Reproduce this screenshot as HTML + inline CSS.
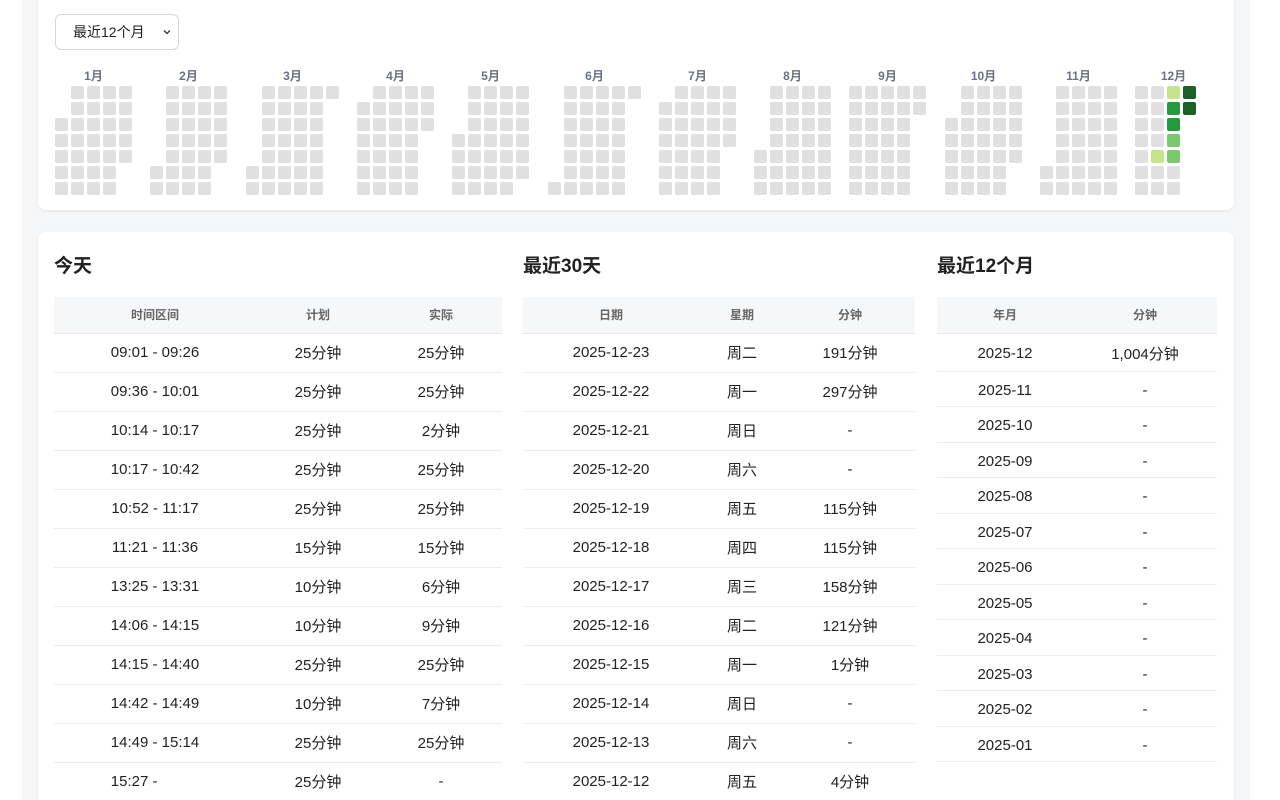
<!DOCTYPE html>
<html><head><meta charset="utf-8">
<style>
*{box-sizing:border-box;margin:0;padding:0}
html,body{width:1280px;height:800px;overflow:hidden;background:#fff;font-family:"Liberation Sans","Noto Sans CJK SC",sans-serif;color:#222}
.wrap{position:relative;width:1280px;height:800px;overflow:hidden}
.bg{position:absolute;left:22px;top:0;width:1228px;height:800px;background:#f5f6f8}
.card{position:absolute;left:38px;width:1196px;background:#fff;border-radius:8px;box-shadow:0 1px 3px rgba(0,0,0,.08)}
#c1{top:-10px;height:220px}
#c2{top:232px;height:600px}
.sel{position:absolute;left:55px;top:14px;width:124px;height:36px;border:1px solid #d4d7dc;border-radius:6px;background:#fff;font-size:14px;line-height:34px;padding-left:17px;color:#222}
.sel svg{position:absolute;right:6px;top:13px}
.ml{position:absolute;top:67px;font-size:12px;font-weight:bold;color:#6b7280;text-align:center}
.cell{position:absolute;width:13px;height:13px;border-radius:2px;background:#e0e0e0}
h2{position:absolute;top:251px;font-size:19px;font-weight:bold;color:#222}
table{position:absolute;top:297px;border-collapse:collapse;font-size:15px;table-layout:fixed}
th{height:36px;background:#f6f7f9;font-size:12px;font-weight:bold;color:#666;border-bottom:1px solid #e3e5e8;text-align:center}
td{height:39px;text-align:center;border-bottom:1px solid #ebedf0}
#t3 td{height:35.5px;padding-top:3px}
#t3 tr:nth-child(2) td{height:38px}
</style></head><body><div class="wrap">
<div class="bg"></div>
<div class="card" id="c1"></div>
<div class="sel">最近12个月<svg width="10" height="8" viewBox="0 0 10 8"><path d="M2 2.5l3 3 3-3" fill="none" stroke="#333" stroke-width="1.3"/></svg></div>
<div id="hm"></div>
<div class="card" id="c2"></div>
<h2 style="left:54px">今天</h2>
<h2 style="left:523px">最近30天</h2>
<h2 style="left:937px">最近12个月</h2>
<table style="left:54px;width:448px">
<colgroup><col style="width:202px"><col style="width:124px"><col style="width:122px"></colgroup>
<tr><th>时间区间</th><th>计划</th><th>实际</th></tr>
<tr><td>09:01 - 09:26</td><td>25分钟</td><td>25分钟</td></tr>
<tr><td>09:36 - 10:01</td><td>25分钟</td><td>25分钟</td></tr>
<tr><td>10:14 - 10:17</td><td>25分钟</td><td>2分钟</td></tr>
<tr><td>10:17 - 10:42</td><td>25分钟</td><td>25分钟</td></tr>
<tr><td>10:52 - 11:17</td><td>25分钟</td><td>25分钟</td></tr>
<tr><td>11:21 - 11:36</td><td>15分钟</td><td>15分钟</td></tr>
<tr><td>13:25 - 13:31</td><td>10分钟</td><td>6分钟</td></tr>
<tr><td>14:06 - 14:15</td><td>10分钟</td><td>9分钟</td></tr>
<tr><td>14:15 - 14:40</td><td>25分钟</td><td>25分钟</td></tr>
<tr><td>14:42 - 14:49</td><td>10分钟</td><td>7分钟</td></tr>
<tr><td>14:49 - 15:14</td><td>25分钟</td><td>25分钟</td></tr>
<tr><td>15:27 - <span style="visibility:hidden">15:41</span></td><td>25分钟</td><td>-</td></tr>
</table>
<table style="left:523px;width:392px">
<colgroup><col style="width:176px"><col style="width:86px"><col style="width:130px"></colgroup>
<tr><th>日期</th><th>星期</th><th>分钟</th></tr>
<tr><td>2025-12-23</td><td>周二</td><td>191分钟</td></tr>
<tr><td>2025-12-22</td><td>周一</td><td>297分钟</td></tr>
<tr><td>2025-12-21</td><td>周日</td><td>-</td></tr>
<tr><td>2025-12-20</td><td>周六</td><td>-</td></tr>
<tr><td>2025-12-19</td><td>周五</td><td>115分钟</td></tr>
<tr><td>2025-12-18</td><td>周四</td><td>115分钟</td></tr>
<tr><td>2025-12-17</td><td>周三</td><td>158分钟</td></tr>
<tr><td>2025-12-16</td><td>周二</td><td>121分钟</td></tr>
<tr><td>2025-12-15</td><td>周一</td><td>1分钟</td></tr>
<tr><td>2025-12-14</td><td>周日</td><td>-</td></tr>
<tr><td>2025-12-13</td><td>周六</td><td>-</td></tr>
<tr><td>2025-12-12</td><td>周五</td><td>4分钟</td></tr>
</table>
<table id="t3" style="left:937px;width:280px">
<colgroup><col style="width:136px"><col style="width:144px"></colgroup>
<tr><th>年月</th><th>分钟</th></tr>
<tr><td>2025-12</td><td>1,004分钟</td></tr>
<tr><td>2025-11</td><td>-</td></tr>
<tr><td>2025-10</td><td>-</td></tr>
<tr><td>2025-09</td><td>-</td></tr>
<tr><td>2025-08</td><td>-</td></tr>
<tr><td>2025-07</td><td>-</td></tr>
<tr><td>2025-06</td><td>-</td></tr>
<tr><td>2025-05</td><td>-</td></tr>
<tr><td>2025-04</td><td>-</td></tr>
<tr><td>2025-03</td><td>-</td></tr>
<tr><td>2025-02</td><td>-</td></tr>
<tr><td>2025-01</td><td>-</td></tr>
</table>
</div>
<script>
(function(){
var hm=document.getElementById('hm'),h='';
var col={15:'#c6e48b',16:'#239a3b',17:'#239a3b',18:'#7bc96f',19:'#7bc96f',12:'#c6e48b',22:'#196127',23:'#196127'};
var x=55;
for(var m=0;m<12;m++){
 var days=new Date(2025,m+1,0).getDate();
 var first=(new Date(2025,m,1).getDay()+6)%7;
 var cols=Math.ceil((first+days)/7);
 var xr=Math.round(x);
 h+='<div class="ml" style="left:'+xr+'px;width:'+(cols*16-3)+'px">'+(m+1)+'月</div>';
 for(var d=1;d<=days;d++){
  if(m==11&&d>23)break;
  var i=first+d-1,c=Math.floor(i/7),r=i%7;
  var bg=(m==11&&col[d])?';background:'+col[d]:'';
  h+='<div class="cell" style="left:'+(xr+c*16)+'px;top:'+(86+r*16)+'px'+bg+'"></div>';
 }
 x+=cols*16+15.3;
}
hm.innerHTML=h;
})();
</script>
</body></html>
